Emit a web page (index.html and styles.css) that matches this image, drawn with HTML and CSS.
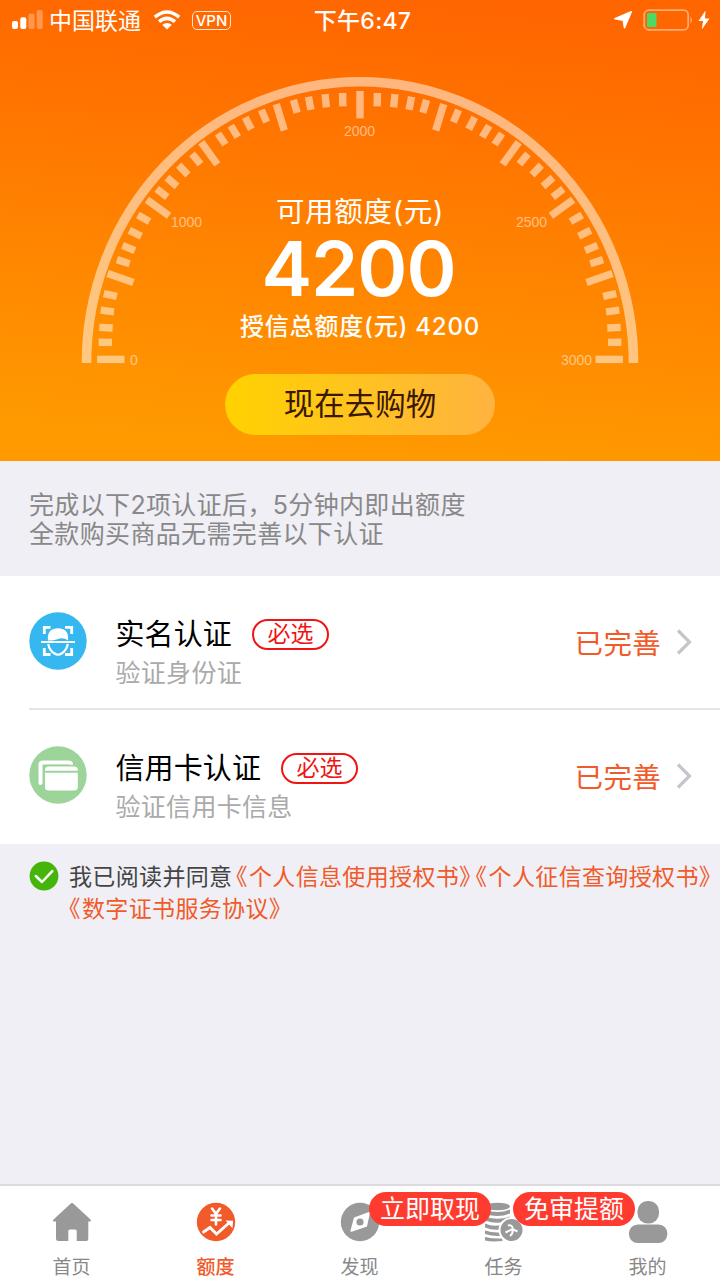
FILE: index.html
```html
<!DOCTYPE html>
<html lang="zh-CN">
<head>
<meta charset="utf-8">
<title>额度</title>
<link rel="stylesheet" href="styles.css">
</head>
<body>
<div class="app">
  <header class="hero">
    <svg class="gauge" width="720" height="461" viewBox="0 0 720 461">
      <defs>
        <rect id="minor" x="-6.7" y="-3.7" width="13.4" height="7.4"/>
        <rect id="major" x="-13.7" y="-3.7" width="27.4" height="7.4"/>
        <g id="ticks">
          <use href="#minor" transform="translate(105.3 342.3) rotate(1)"/>
          <use href="#minor" transform="translate(106 327.7) rotate(3)"/>
          <use href="#minor" transform="translate(107.3 311) rotate(7)"/>
          <use href="#minor" transform="translate(110.3 295) rotate(12)"/>
          <use href="#major" transform="translate(120.5 278) rotate(19)"/>
          <use href="#minor" transform="translate(123.3 261.7) rotate(18)"/>
          <use href="#minor" transform="translate(128.7 248) rotate(23)"/>
          <use href="#minor" transform="translate(135.3 233.3) rotate(26)"/>
          <use href="#minor" transform="translate(143.7 218.3) rotate(30)"/>
          <use href="#major" transform="translate(158 207.7) rotate(36)"/>
          <use href="#minor" transform="translate(162 193) rotate(38)"/>
          <use href="#minor" transform="translate(172 182) rotate(41)"/>
          <use href="#minor" transform="translate(183.3 170) rotate(46)"/>
          <use href="#minor" transform="translate(196.3 159) rotate(50)"/>
          <use href="#major" transform="translate(209.3 153.3) rotate(54)"/>
          <use href="#minor" transform="translate(221.7 139) rotate(56)"/>
          <use href="#minor" transform="translate(234.3 131.3) rotate(59)"/>
          <use href="#minor" transform="translate(248.3 123.3) rotate(63)"/>
          <use href="#minor" transform="translate(264 116) rotate(67)"/>
          <use href="#major" transform="translate(280.3 117.3) rotate(73)"/>
          <use href="#minor" transform="translate(295.3 106.3) rotate(74)"/>
          <use href="#minor" transform="translate(309.7 103.3) rotate(79)"/>
          <use href="#minor" transform="translate(325.7 100.7) rotate(84)"/>
          <use href="#minor" transform="translate(342.7 99.7) rotate(89)"/>
          <use href="#major" transform="translate(110.8 359.4)"/>
        </g>
      </defs>
      <g opacity=".5" fill="#fff">
        <path d="M86.5 363A273.5 281.3 0 0 1 633.5 363" fill="none" stroke="#fff" stroke-width="9.6"/>
        <use href="#ticks"/>
        <use href="#ticks" transform="translate(720 0) scale(-1 1)"/>
        <use href="#major" transform="translate(360 104.7) rotate(90)"/>
        <g class="scale">
          <text x="130" y="365">0</text>
          <text x="171" y="227">1000</text>
          <text x="344" y="135.500">2000</text>
          <text x="516" y="227">2500</text>
          <text x="561" y="365">3000</text>
        </g>
      </g>
    </svg>
    <div class="hero-body">
      <div class="status">
        <div class="status-left">
          <svg width="32" height="20" viewBox="0 0 32 20" fill="#fff"><rect x="0" y="11" width="6" height="8" rx="2"/><rect x="8.300" y="7.200" width="6" height="11.800" rx="2"/><rect x="16.500" y="3.500" width="6" height="15.500" rx="2" opacity=".3"/><rect x="24.700" y="0" width="6" height="19" rx="2" opacity=".3"/></svg>
          <span class="carrier">中国联通</span>
          <svg class="wifi" width="28" height="20" viewBox="0 0 28 20"><g fill="none" stroke="#fff" stroke-width="3.500"><path d="M1.800 7.200Q14-3.200 26.200 7.200"/><path d="M6 11.700Q14 5 22 11.700"/></g><path d="M9.200 14.700Q14 11.200 18.800 14.700L14 19.600Z" fill="#fff"/></svg>
          <span class="vpn">VPN</span>
        </div>
        <span class="time">下午6:47</span>
        <div class="status-right">
          <svg width="20" height="20" viewBox="0 0 20 20" fill="#fff" stroke="#fff" stroke-width="1.600" stroke-linejoin="round"><path d="M18.300 1.800L11.500 17.600 10.300 10.200 2 8.700Z"/></svg>
          <svg class="battery" width="52" height="24" viewBox="0 0 52 24"><rect x="1.200" y="2.200" width="44" height="19.600" rx="4.500" fill="none" stroke="#fff" stroke-opacity=".45" stroke-width="1.800"/><path d="M47.500 8.500Q50.500 12 47.500 15.500Z" fill="#fff" opacity=".5"/><rect x="4" y="5" width="9.500" height="14" rx="1" fill="#4cd964"/></svg>
          <svg class="bolt" width="12" height="20" viewBox="0 0 12 20" fill="#fff"><path d="M7.500.5L.5 11H5L3.800 19.500 11.500 8.500H7Z"/></svg>
        </div>
      </div>
      <div class="avail">可用额度(元)</div>
      <div class="amount">4200</div>
      <div class="total">授信总额度(元) 4200</div>
      <a class="shop">现在去购物</a>
    </div>
  </header>

  <p class="notice">完成以下2项认证后，5分钟内即出额度<br>全款购买商品无需完善以下认证</p>

  <section class="list">
    <div class="item">
      <svg class="item-icon" width="58" height="58" viewBox="0 0 58 58"><circle cx="29" cy="29" r="28.700" fill="#35b8f0"/><g fill="none" stroke="#fff" stroke-width="2.800"><path d="M15.300 22V15.300H21.500M36 15.300H42.700V22M42.700 36V42.500H36M21.500 42.500H15.300V36"/><path d="M19.200 32Q20.500 38.500 25.500 41.500Q29 44 32.500 41.500Q37.500 38.500 38.800 32" stroke-width="2.200"/></g><path d="M19 28.400Q17.500 16.500 29 16.200Q40.500 16.500 39 28.400Q34 24.800 28.500 27.200Q23 29 19 28.400Z" fill="#fff"/><path d="M12 30H46" stroke="#fff" stroke-width="2"/></svg>
      <div class="item-text">
        <div class="item-head"><span class="item-title">实名认证</span><span class="tag">必选</span></div>
        <div class="item-sub">验证身份证</div>
      </div>
      <span class="state">已完善</span>
      <svg class="chevron" width="16" height="26" viewBox="0 0 16 26"><path d="M2 1.500L13.500 13 2 24.500" fill="none" stroke="#c5c5cb" stroke-width="3.200"/></svg>
    </div>
    <div class="item">
      <svg class="item-icon" width="58" height="58" viewBox="0 0 58 58"><circle cx="29" cy="29" r="28.700" fill="#9dd499"/><path d="M11.500 37V18.500Q11.500 16.500 14 16.500H39.500Q41.500 16.500 42 18" fill="none" stroke="#fff" stroke-width="4" stroke-linecap="round"/><rect x="14.500" y="18.800" width="35" height="26.500" rx="4" fill="#9dd499"/><rect x="16" y="20.500" width="32.800" height="24" rx="3.500" fill="#fff"/><path d="M16 25.700H49" stroke="#9dd499" stroke-width="2"/></svg>
      <div class="item-text">
        <div class="item-head"><span class="item-title">信用卡认证</span><span class="tag">必选</span></div>
        <div class="item-sub">验证信用卡信息</div>
      </div>
      <span class="state">已完善</span>
      <svg class="chevron" width="16" height="26" viewBox="0 0 16 26"><path d="M2 1.500L13.500 13 2 24.500" fill="none" stroke="#c5c5cb" stroke-width="3.200"/></svg>
    </div>
  </section>

  <section class="agree">
    <svg width="30" height="30" viewBox="0 0 30 30"><circle cx="15" cy="15" r="14.400" fill="#45b50b"/><path d="M6.800 15L13 21 23.300 10.200" fill="none" stroke="#fff" stroke-width="2.500" stroke-linecap="round" stroke-linejoin="round"/></svg>
    <p class="agree-text">我已阅读并同意<a><i>《</i>个人信息使用授权书<i>》</i></a><a><i>《</i>个人征信查询授权书<i>》</i></a><br><a class="newline"><i>《</i>数字证书服务协议<i>》</i></a></p>
  </section>

  <nav class="tabs">
    <a class="tab">
      <svg width="40" height="40" viewBox="0 0 40 40"><path d="M18.500 1.700Q20 .5 21.500 1.700L38.500 17.500Q39.500 19.500 37.500 19.500H36.300V37Q36.300 39 34.300 39H24.700V29Q24.700 27.500 23.200 27.500H18Q16.300 27.500 16.300 29V39H6.500Q4 39 4 37V19.500H2.200Q.2 19.500 1.500 17.500Z" fill="#999"/></svg>
      <span>首页</span>
    </a>
    <a class="tab active">
      <svg width="40" height="40" viewBox="0 0 40 40"><circle cx="20" cy="20" r="19.200" fill="#f15a29"/><g fill="none" stroke="#fff" stroke-width="2.600" stroke-linecap="round"><path d="M16 6.500L20 11.800 24 6.500M20 12V22.500M15.500 13.500H24.500M15.500 18H24.500"/><path d="M7.500 30L14 25.500 20.500 32 33.500 20.500" stroke-width="2.900"/></g><path d="M29.500 18.500L37 18.800 36.500 26.300Z" fill="#fff"/></svg>
      <span>额度</span>
    </a>
    <a class="tab">
      <svg width="40" height="40" viewBox="0 0 40 40"><circle cx="20" cy="20" r="19.200" fill="#999"/><path d="M28.300 10.200Q30.200 9.500 29.800 11.500L27 24.500 11.700 29.700Q10 30 10.500 28.500L14 15.500Z" fill="#fff"/><circle cx="20" cy="20" r="3.600" fill="#999"/></svg>
      <span>发现</span>
      <b class="badge">立即取现</b>
    </a>
    <a class="tab">
      <svg width="40" height="40" viewBox="0 0 40 40"><g fill="#999"><ellipse cx="13.500" cy="4.500" rx="12.500" ry="3.800"/><path d="M1 7.500Q13.500 12.500 26 7.500V11.500Q13.500 16.500 1 11.500ZM1 14.500Q13.500 19 26 14.500V18.500Q13.500 23 1 18.500ZM1 21.500Q9 25 17 23V27.500Q8 28.500 1 25.500ZM1 28.500Q8 31 16 30.500L17.500 34Q8 34.500 1 32ZM1 35Q9 37 18.500 36.500V39Q8 40 1 38.500Z"/></g><circle cx="27.500" cy="28" r="12" fill="#999" stroke="#fff" stroke-width="2"/><path d="M24 23.500Q28 22.500 28.800 26.500M21.500 30.500L28.500 27 33.500 29.500M28.800 27.500Q29 32 26 34" fill="none" stroke="#fff" stroke-width="2"/></svg>
      <span>任务</span>
      <b class="badge">免审提额</b>
    </a>
    <a class="tab">
      <svg width="40" height="44" viewBox="0 0 40 44" fill="#999"><rect x="9.500" y="1" width="21.500" height="22.500" rx="10"/><rect x="1" y="24.500" width="38.300" height="18.500" rx="8.800"/></svg>
      <span>我的</span>
    </a>
  </nav>
</div>
</body>
</html>
```
FILE: styles.css
```css
* { box-sizing: border-box; }
body {
  margin: 0;
  font-family: Inter, "Noto Sans CJK SC", sans-serif;
  background: #efeff5;
}
svg { display: block; flex: none; }
.app { width: 720px; height: 1280px; display: flex; flex-direction: column; overflow: hidden; }

.hero { display: grid; height: 461px; flex: none; background: linear-gradient(185deg, #ff6600 6%, #ff6a00 14%, #ff9b00 94%); }
.gauge, .hero-body { grid-area: 1 / 1; }
.scale { font: 14px "Liberation Sans", sans-serif; }
.hero-body { display: flex; flex-direction: column; align-items: center; color: #fff; z-index: 1; }

.status { width: 720px; height: 40px; display: grid; grid-template-columns: 1fr auto 1fr; align-items: center; font-size: 23px; line-height: 32px; }
.status-left { display: flex; align-items: center; padding-left: 12px; }
.carrier { margin-left: 5px; padding-top: 1px; }
.wifi { margin-left: 12px; }
.vpn { margin-left: 11px; width: 39px; height: 19px; border: 1.500px solid #ffe3cf; border-radius: 5px; font-size: 15px; font-weight: 500; line-height: 17px; text-align: center; }
.time { padding: 1px 0 0 5px; font-weight: 500; letter-spacing: .3px; }
.status-right { display: flex; align-items: center; justify-content: flex-end; padding-right: 10px; }
.battery { margin-left: 10px; }
.bolt { margin-left: 3px; }

.avail { margin-top: 154px; font-size: 28.500px; line-height: 36px; letter-spacing: .7px; }
.amount { margin-top: 4px; padding-right: 3px; font-size: 76px; font-weight: 600; line-height: 68px; letter-spacing: -1px; }
.total { margin-top: 8px; font-size: 24px; font-weight: 500; line-height: 34px; letter-spacing: .8px; }
.shop { margin-top: 30px; width: 270px; height: 61px; border-radius: 31px; background: linear-gradient(90deg, #ffd200, #ffb340); color: #3a1800; font-size: 30.500px; line-height: 59px; text-align: center; }

.notice { margin: 0; flex: none; height: 115px; padding: 30px 29px 0; color: #888; font-size: 25px; line-height: 29px; letter-spacing: .35px; }

.list { flex: none; background: #fff; padding-left: 29px; }
.item { height: 134px; display: flex; align-items: center; padding-right: 28px; border-bottom: 2px solid #e5e5e7; }
.item:last-child { border-bottom-color: transparent; }
.item-icon { margin-top: -2px; }
.item-text { flex: 1; padding: 21px 0 0 28.500px; }
.item-head { display: flex; align-items: center; height: 40px; gap: 20px; }
.item-title { color: #000; font-size: 29px; line-height: 36px; letter-spacing: .1px; }
.tag { width: 77px; height: 31px; border: 2px solid #f01414; border-radius: 16px; color: #f01414; font-size: 23px; line-height: 27px; text-align: center; }
.item-sub { color: #aaa; font-size: 25px; line-height: 36px; letter-spacing: .3px; }
.state { padding-top: 3px; color: #f15a29; font-size: 28.500px; line-height: 36px; letter-spacing: .3px; }
.chevron { margin-left: 15px; }

.agree { flex: 1; display: flex; padding: 17px 0 0 29px; }
.agree-text { margin: 1px 0 0 10px; color: #444; font-size: 23px; line-height: 31.500px; letter-spacing: .350px; white-space: nowrap; }
.agree-text a { color: #f15a29; margin-left: 3.500px; }
.agree-text a.newline { margin-left: 0; }
.agree-text i { font-style: normal; font-feature-settings: "halt"; letter-spacing: 1.500px; }

.tabs { flex: none; height: 96px; margin-top: -1px; display: grid; grid-template-columns: repeat(5, 144px); background: #fff; border-top: 2px solid #dcdce0; }
.tab { position: relative; display: flex; flex-direction: column; align-items: center; justify-content: space-between; padding: 16px 1px 0 0; color: #888; font-size: 19px; line-height: 24px; }
.tab:last-child { padding-top: 14px; }
.tab.active { color: #f15a29; font-weight: 500; }
.badge { position: absolute; left: 81px; top: 6px; z-index: 2; width: 122px; height: 34px; border-radius: 17px; background: #ff3b30; color: #fff; font-size: 25px; font-weight: 400; line-height: 34px; text-align: center; }
```
